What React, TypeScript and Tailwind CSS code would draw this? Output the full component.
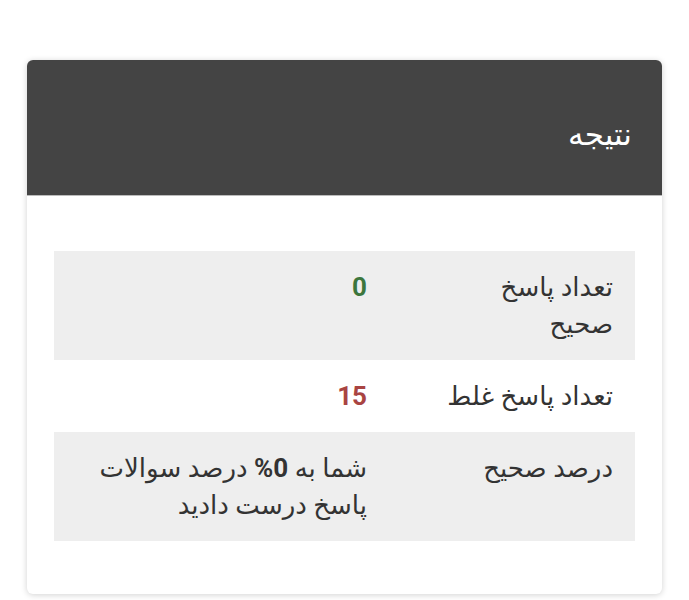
import React from "react";

const rows = [
  { label: "تعداد پاسخ صحیح", value: <span className="font-bold text-[#3c763d]">0</span>, shaded: true },
  { label: "تعداد پاسخ غلط", value: <span className="font-bold text-[#a94442]">15</span>, shaded: false },
  {
    label: "درصد صحیح",
    value: (
      <>
        شما به <span className="font-bold">0%</span> درصد سوالات پاسخ درست دادید
      </>
    ),
    shaded: true,
  },
];

export default function App() {
  return (
    <div className="min-h-[600px] bg-white pt-[60px] font-['Roboto','DejaVu_Sans',sans-serif]">
      <div
        dir="rtl"
        className="mx-[27px] rounded-[6px] bg-white shadow-[0_1px_6px_rgba(0,0,0,0.18)] overflow-hidden"
      >
        {/* header */}
        <div className="flex h-[136px] items-center border-b border-[#bbb] bg-[#444] pr-[30px] pt-[14px]">
          <h2 className="text-[31px] leading-[40px] font-normal text-white">نتیجه</h2>
        </div>

        {/* result table */}
        <div className="px-[27px] pt-[55px] pb-[53px]">
          <table className="w-full border-collapse text-[26px] leading-[37px] text-[#333]">
            <tbody>
              {rows.map((row) => (
                <tr key={row.label} className={row.shaded ? "bg-[#eeeeee]" : "bg-white"}>
                  <td className="w-[246px] px-[22px] py-[17.5px] align-top">
                    <div className="max-w-[172px]">{row.label}</div>
                  </td>
                  <td className="px-[22px] py-[17.5px] align-top">{row.value}</td>
                </tr>
              ))}
            </tbody>
          </table>
        </div>
      </div>
    </div>
  );
}
